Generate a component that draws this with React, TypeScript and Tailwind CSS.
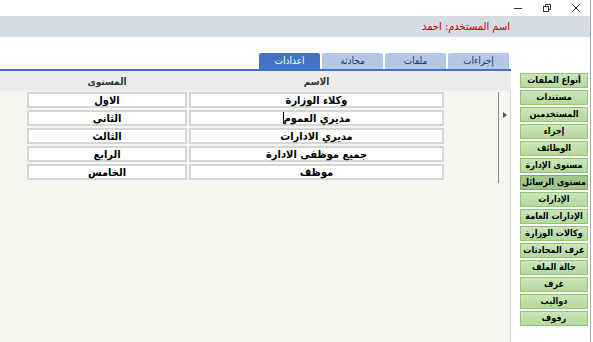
import React from "react";

const rows: [string, string][] = [
  ["الاول", "وكلاء الوزارة"],
  ["الثانى", "مديري العموم"],
  ["الثالث", "مديري الادارات"],
  ["الرابع", "جميع موظفى الادارة"],
  ["الخامس", "موظف"],
];

const buttons = [
  "أنواع الملفات",
  "مستندات",
  "المستخدمين",
  "إجراء",
  "الوظائف",
  "مستوى الإدارة",
  "مستوى الرسائل",
  "الإدارات",
  "الإدارات العامة",
  "وكالات الوزارة",
  "غرف المحادثات",
  "حالة الملف",
  "غرف",
  "دواليب",
  "رفوف",
];

const tabs = [
  { label: "اعدادات", active: true },
  { label: "محادثة", active: false },
  { label: "ملفات", active: false },
  { label: "إجراءات", active: false },
];

export default function App() {
  return (
    <div className="w-[593px] h-[342px] overflow-hidden bg-white flex font-['DejaVu_Sans_Condensed','DejaVu_Sans',sans-serif]">
      <div className="w-[590px] h-full flex flex-col">
        {/* title bar */}
        <div className="h-[16px] flex items-center justify-end pr-[10px] gap-[21px] text-[#333]">
          <svg width="8" height="8" viewBox="0 0 8 8">
            <line x1="0" y1="4.5" x2="8" y2="4.5" stroke="#333" strokeWidth="1" />
          </svg>
          <svg width="8" height="8" viewBox="0 0 8 8">
            <rect x="0.5" y="2.5" width="5" height="5" fill="none" stroke="#333" strokeWidth="1" />
            <path d="M2.5 2.5 V0.5 H7.5 V5.5 H5.5" fill="none" stroke="#333" strokeWidth="1" />
          </svg>
          <svg width="8" height="8" viewBox="0 0 8 8">
            <path d="M0.5 0.5 L7.5 7.5 M7.5 0.5 L0.5 7.5" stroke="#333" strokeWidth="1" />
          </svg>
        </div>
        {/* user band */}
        <div className="h-[21px] bg-[#d6dce4] flex items-center justify-end pr-[80px]">
          <span dir="rtl" className="text-[11px] text-[#c00000] leading-none">
            اسم المستخدم: احمد
          </span>
        </div>
        {/* tabs */}
        <div className="h-[32px] flex items-end justify-end pr-[81px] gap-[2px]">
          {tabs.map((t) => (
            <div
              key={t.label}
              dir="rtl"
              className={
                "w-[61px] h-[16px] rounded-t-[2px] flex items-center justify-center text-[10px] leading-none " +
                (t.active ? "bg-[#4472c4] text-white" : "bg-[#b4c7e7] text-[#1f3864]")
              }
            >
              {t.label}
            </div>
          ))}
        </div>
        {/* main */}
        <div className="flex-1 flex">
          <div className="w-[511px] flex flex-col">
            <div className="h-[2px] bg-[#4472c4]" />
            <div className="h-[20px] bg-[#ececec] flex items-center pl-[27px] gap-[2px] text-[10px] font-bold text-[#333]">
              <div dir="rtl" className="w-[160px] text-center">المستوى</div>
              <div dir="rtl" className="w-[255px] text-center">الاسم</div>
            </div>
            <div className="flex-1 bg-[#f6f6ee] border-r border-[#d9d9d9] flex items-start">
              <div className="w-[498px] pl-[27px] pt-[1px] flex flex-col gap-[2px]">
                {rows.map(([lvl, name], i) => (
                  <div key={lvl} className="flex gap-[2px] h-[16px]">
                    <div
                      dir="rtl"
                      className="w-[160px] h-full bg-white border-2 border-[#d6d6d6] flex items-center justify-center text-[11px] font-bold text-black leading-none"
                    >
                      {lvl}
                    </div>
                    <div
                      dir="rtl"
                      className="w-[255px] h-full bg-white border-2 border-[#d6d6d6] flex items-center justify-center text-[11px] font-bold text-black leading-none"
                    >
                      <span>{name}</span>
                      {i === 1 && <span className="inline-block w-[1px] h-[12px] bg-black" />}
                    </div>
                  </div>
                ))}
              </div>
              <div className="w-[1px] h-[91px] mt-[1px] bg-[#8c8c8c]" />
              <div className="flex-1 flex justify-center pt-[21px]">
                <svg width="4" height="6" viewBox="0 0 4 6">
                  <path d="M0 0 L4 3 L0 6 Z" fill="#555" />
                </svg>
              </div>
            </div>
          </div>
          <div className="w-[79px] bg-white pl-[9px] pt-[4px] flex flex-col gap-[2px]">
            {buttons.map((b) => (
              <div
                key={b}
                dir="rtl"
                className={
                  "w-[68px] h-[15px] border flex items-center justify-center text-[9px] font-bold text-black leading-none whitespace-nowrap overflow-hidden " +
                  (b === "مستوى الرسائل"
                    ? "bg-[#a3c78b] border-[#7fa865]"
                    : "bg-gradient-to-b from-[#cbe6b9] to-[#b3d99b] border-[#93c477]")
                }
              >
                {b}
              </div>
            ))}
          </div>
        </div>
      </div>
      <div className="w-[1px] h-full bg-[#a6a6a6]" />
      <div className="w-[2px] h-full bg-white" />
    </div>
  );
}
